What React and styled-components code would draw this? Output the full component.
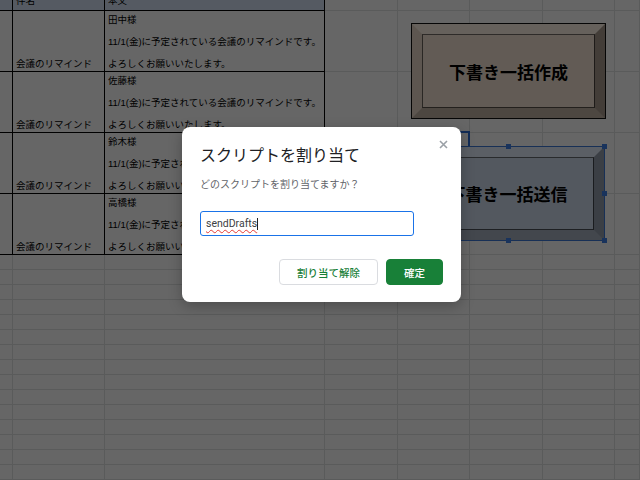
import React from "react";
import styled, { createGlobalStyle } from "styled-components";

const GlobalStyle = createGlobalStyle`
  html, body {
    margin: 0;
    padding: 0;
    width: 640px;
    height: 480px;
    overflow: hidden;
    background: #fff;
  }
  body {
    font-family: "Liberation Sans", "Noto Sans CJK JP", sans-serif;
  }
`;

// column widths of the sheet (A .. H)
const COLS = [13, 92, 220, 73, 72, 73, 72, 25];

const mails = ["田中様", "佐藤様", "鈴木様", "高橋様"];
const BODY = "11/1(金)に予定されている会議のリマインドです。";

export default function App() {
  return (
    <>
      <GlobalStyle />
      <Sheet>
        <Row $h={11}>
          <Cell $w={COLS[0]} $table $head />
          <Cell $w={COLS[1]} $table $head>
            <HeadText>件名</HeadText>
          </Cell>
          <Cell $w={COLS[2]} $table $head>
            <HeadText>本文</HeadText>
          </Cell>
          {COLS.slice(3).map((w, i) => (
            <Cell key={i} $w={w} />
          ))}
        </Row>

        {mails.map((name) => (
          <Row key={name} $h={61}>
            <Cell $w={COLS[0]} $table />
            <SubjectCell $w={COLS[1]} $table>
              会議のリマインド
            </SubjectCell>
            <BodyCell $w={COLS[2]} $table>
              {`${name}\n\n${BODY}\n\nよろしくお願いいたします。`}
            </BodyCell>
            {COLS.slice(3).map((w, i) => (
              <Cell key={i} $w={w} />
            ))}
          </Row>
        ))}

        {Array.from({ length: 15 }).map((_, r) => (
          <Row key={r} $h={15}>
            {COLS.map((w, i) => (
              <Cell key={i} $w={w} />
            ))}
          </Row>
        ))}

        <ActiveCell />

        <DrawingButton
          $left={412}
          $top={24}
          $w={193}
          $h={94}
          $edges={["#fff2e6", "#a89a8c", "#c0b2a4", "#e8d8c8"]}
          $face="#f4e4d4"
        >
          <ButtonFace $face="#f4e4d4">下書き一括作成</ButtonFace>
        </DrawingButton>

        <DrawingButton
          $left={412}
          $top={147}
          $w={192}
          $h={93}
          $edges={["#e4eefc", "#949ead", "#a8b2c1", "#c1cdde"]}
          $face="#d0dcee"
        >
          <ButtonFace $face="#d0dcee">下書き一括送信</ButtonFace>
        </DrawingButton>

        <SelectionFrame />
        {[
          [411, 146],
          [508, 146],
          [604, 146],
          [411, 193],
          [604, 193],
          [411, 240],
          [508, 240],
          [604, 240],
        ].map(([x, y]) => (
          <Handle key={`${x}-${y}`} $x={x} $y={y} />
        ))}

        <Scrim />

        <Dialog role="dialog">
          <CloseButton aria-label="閉じる">
            <svg width="9" height="9" viewBox="0 0 9 9">
              <path d="M1 1L8 8M8 1L1 8" stroke="#9aa0a6" strokeWidth="1.6" />
            </svg>
          </CloseButton>
          <Title>スクリプトを割り当て</Title>
          <Question>どのスクリプトを割り当てますか？</Question>
          <InputBox>
            <Misspelled>sendDrafts</Misspelled>
            <Caret />
          </InputBox>
          <Actions>
            <Button>割り当て解除</Button>
            <Button $primary>確定</Button>
          </Actions>
        </Dialog>
      </Sheet>
    </>
  );
}

const Sheet = styled.div`
  position: relative;
  width: 640px;
  height: 480px;
  overflow: hidden;
  background: #fff;
`;

const Row = styled.div`
  display: flex;
  height: ${(p) => p.$h}px;
`;

const Cell = styled.div`
  flex: 0 0 ${(p) => p.$w}px;
  box-sizing: border-box;
  height: 100%;
  overflow: hidden;
  border-right: 1px solid ${(p) => (p.$table ? "#000" : "#e2e3e3")};
  border-bottom: 1px solid ${(p) => (p.$table ? "#000" : "#e2e3e3")};
  background: ${(p) => (p.$head ? "#d4e2f4" : "#fff")};
  color: #000;
  font-size: 9.5px;
  line-height: 11px;
  padding: 0 3px;
  white-space: nowrap;
`;

const HeadText = styled.div`
  margin-top: -5px;
`;

const SubjectCell = styled(Cell)`
  display: flex;
  align-items: flex-end;
  padding-bottom: 2px;
`;

const BodyCell = styled(Cell)`
  white-space: pre;
  padding-top: 3px;
`;

const ActiveCell = styled.div`
  position: absolute;
  left: 396px;
  top: 131px;
  width: 74px;
  height: 63px;
  box-sizing: border-box;
  border: 2px solid #2f6fd8;
`;

const DrawingButton = styled.div`
  position: absolute;
  left: ${(p) => p.$left}px;
  top: ${(p) => p.$top}px;
  width: ${(p) => p.$w}px;
  height: ${(p) => p.$h}px;
  box-sizing: border-box;
  display: flex;
  border: 11px solid;
  border-color: ${(p) => p.$edges.join(" ")};
  box-shadow: 0 0 0 1px #111;
  background: ${(p) => p.$face};
`;

const ButtonFace = styled.div`
  flex: 1;
  display: flex;
  align-items: center;
  justify-content: center;
  background: ${(p) => p.$face};
  box-shadow: 0 0 0 1px rgba(0, 0, 0, 0.55);
  font-family: "Noto Sans CJK JP", sans-serif;
  font-weight: 700;
  font-size: 17px;
  color: #000;
`;

const SelectionFrame = styled.div`
  position: absolute;
  left: 411px;
  top: 146px;
  width: 194px;
  height: 95px;
  box-sizing: border-box;
  border: 1px solid #3c78d8;
`;

const Handle = styled.div`
  position: absolute;
  left: ${(p) => p.$x - 2}px;
  top: ${(p) => p.$y - 2}px;
  width: 5px;
  height: 5px;
  background: #3f7fe6;
`;

const Scrim = styled.div`
  position: absolute;
  inset: 0;
  background: rgba(0, 0, 0, 0.6);
`;

const Dialog = styled.div`
  position: absolute;
  left: 182px;
  top: 127px;
  width: 279px;
  box-sizing: border-box;
  padding: 19px 18px 17px;
  background: #fff;
  border-radius: 8px;
  box-shadow: 0 4px 14px rgba(0, 0, 0, 0.25);
  font-family: Roboto, "Noto Sans CJK JP", sans-serif;
`;

const CloseButton = styled.div`
  position: absolute;
  right: 13px;
  top: 13px;
  width: 9px;
  height: 9px;
  display: flex;
`;

const Title = styled.div`
  font-size: 16px;
  line-height: 20px;
  color: #202124;
`;

const Question = styled.div`
  margin-top: 12px;
  font-size: 10px;
  line-height: 14px;
  color: #5f6368;
`;

const InputBox = styled.div`
  margin-top: 19px;
  width: 214px;
  height: 25px;
  box-sizing: border-box;
  border: 1.5px solid #1a73e8;
  border-radius: 3px;
  padding: 0 5px;
  display: flex;
  align-items: center;
  font-size: 10.5px;
  color: #3c4043;
`;

const Misspelled = styled.span`
  text-decoration: underline wavy #e53935;
  text-decoration-thickness: 1px;
  text-underline-offset: 2px;
`;

const Caret = styled.span`
  width: 1px;
  height: 12px;
  background: #202124;
`;

const Actions = styled.div`
  margin-top: 23px;
  display: flex;
  justify-content: flex-end;
  gap: 8px;
`;

const Button = styled.button`
  height: 26px;
  box-sizing: border-box;
  padding: 0 ${(p) => (p.$primary ? "17px" : "17px")};
  min-width: ${(p) => (p.$primary ? "56px" : "98px")};
  border-radius: 4px;
  border: 1px solid ${(p) => (p.$primary ? "#188038" : "#dadce0")};
  background: ${(p) => (p.$primary ? "#188038" : "#fff")};
  color: ${(p) => (p.$primary ? "#fff" : "#188038")};
  font-family: Roboto, "Noto Sans CJK JP", sans-serif;
  font-size: 10.5px;
  font-weight: 500;
`;
